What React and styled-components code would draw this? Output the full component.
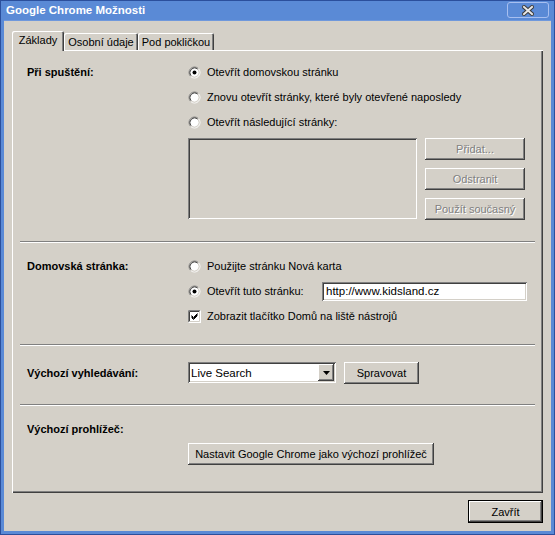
import React from 'react';
import styled, { createGlobalStyle, css } from 'styled-components';

const Global = createGlobalStyle`
  html, body { margin: 0; padding: 0; background: #d4d0c8; }
  body {
    font-family: "Liberation Sans", Arial, sans-serif;
    font-size: 11px;
    color: #000;
  }
  * { box-sizing: border-box; }
`;

const raised = css`
  background: #d4d0c8;
  border: none;
  box-shadow: inset -1px -1px #404040, inset 1px 1px #ffffff,
    inset -2px -2px #808080, inset 2px 2px #d4d0c8;
`;

const sunken = css`
  border: none;
  box-shadow: inset 1px 1px #808080, inset -1px -1px #ffffff,
    inset 2px 2px #404040, inset -2px -2px #d4d0c8;
`;

const Frame = styled.div`
  width: 555px;
  height: 535px;
  background: #5a8ad6;
  border: 1px solid #2b4f9c;
  padding: 0 3px 3px 3px;
  display: flex;
  flex-direction: column;
`;

const TitleBar = styled.div`
  height: 20px;
  display: flex;
  align-items: flex-start;
  justify-content: space-between;
  padding: 0 2px;
  border-bottom: 1px solid #6f98dc;
`;

const Title = styled.div`
  color: #ffffff;
  font-weight: bold;
  font-size: 11.5px;
  line-height: 19px;
`;

const CloseButton = styled.div`
  width: 42px;
  height: 16px;
  margin-top: 1px;
  border: 1px solid #a7bff0;
  border-radius: 3px;
  background: #5a8ad6;
  display: flex;
  align-items: center;
  justify-content: center;
`;

const Client = styled.div`
  flex: 1;
  background: #d4d0c8;
  padding: 10px 8px 8px 8px;
  display: flex;
  flex-direction: column;
`;

const TabStrip = styled.div`
  display: flex;
  align-items: flex-end;
  height: 19px;
`;

const Tab = styled.div`
  width: ${p => p.$w}px;
  height: ${p => (p.$active ? 20 : 17)}px;
  margin-bottom: ${p => (p.$active ? -1 : 0)}px;
  position: relative;
  z-index: ${p => (p.$active ? 2 : 1)};
  background: #d4d0c8;
  border-radius: 2px 2px 0 0;
  box-shadow: inset 1px 1px #ffffff, inset -1px 0 #404040, inset -2px 0 #808080;
  display: flex;
  align-items: ${p => (p.$active ? 'flex-start' : 'center')};
  padding-top: ${p => (p.$active ? 3 : 0)}px;
  justify-content: center;
  white-space: nowrap;
`;

const Panel = styled.div`
  height: 443px;
  background: #d4d0c8;
  box-shadow: inset 1px 1px #ffffff, inset -1px -1px #404040,
    inset -2px -2px #808080;
  padding: 1px 8px;
  display: flex;
  flex-direction: column;
`;

const Section = styled.div`
  display: grid;
  grid-template-columns: 161px 1fr;
  align-items: start;
  padding: ${p => p.$top}px 7px ${p => p.$bottom}px 7px;
`;

const Label = styled.div`
  font-weight: bold;
  line-height: ${p => p.$h || 20}px;
  height: ${p => p.$h || 20}px;
  white-space: nowrap;
`;

const Controls = styled.div`
  display: flex;
  flex-direction: column;
  gap: ${p => p.$gap ?? 5}px;
`;

const Choice = styled.div`
  height: 20px;
  display: flex;
  align-items: center;
  gap: 6px;
  white-space: nowrap;
`;

const Separator = styled.div`
  height: 2px;
  border-top: 1px solid #808080;
  border-bottom: 1px solid #ffffff;
`;

const ListRow = styled.div`
  display: flex;
  gap: 8px;
  margin-top: 1px;
`;

const ListBox = styled.div`
  ${sunken};
  width: 229px;
  height: 81px;
  background: #d4d0c8;
`;

const SideButtons = styled.div`
  display: flex;
  flex-direction: column;
  gap: 8px;
`;

const Button = styled.div`
  ${raised};
  width: ${p => p.$w}px;
  height: ${p => p.$h || 22}px;
  display: flex;
  align-items: center;
  justify-content: center;
  white-space: nowrap;
  color: ${p => (p.$disabled ? '#808080' : '#000')};
  text-shadow: ${p => (p.$disabled ? '1px 1px #ffffff' : 'none')};
`;

const DefaultButton = styled(Button)`
  box-shadow: inset 0 0 0 1px #000000, inset -2px -2px #404040,
    inset 2px 2px #ffffff, inset -3px -3px #808080;
`;

const UrlInput = styled.div`
  ${sunken};
  background: #ffffff;
  width: 205px;
  height: 19px;
  margin-left: auto;
  margin-right: 1px;
  padding: 0 4px;
  display: flex;
  align-items: center;
  font-size: 11.5px;
`;

const SearchRow = styled.div`
  display: flex;
  gap: 8px;
  align-items: flex-start;
`;

const Select = styled.div`
  ${sunken};
  background: #ffffff;
  width: 148px;
  height: 21px;
  padding: 2px 2px 2px 3px;
  display: flex;
  align-items: center;
  justify-content: space-between;
  font-size: 11.5px;
`;

const DropButton = styled.div`
  ${raised};
  width: 16px;
  height: 17px;
  display: flex;
  align-items: center;
  justify-content: center;
`;

const Footer = styled.div`
  display: flex;
  justify-content: flex-end;
  padding-top: 7px;
`;

const BrowserBlock = styled.div`
  display: flex;
  flex-direction: column;
  gap: 4px;
  padding: 13px 7px 0 7px;
`;

const Indent = styled.div`
  padding-left: 161px;
`;

function Radio({ checked }) {
  return (
    <svg width="13" height="13" viewBox="0 0 13 13">
      <circle cx="6.5" cy="6.5" r="4.5" fill="#ffffff" />
      <path d="M2.61 10.39 A5.5 5.5 0 0 1 10.39 2.61" fill="none" stroke="#808080" strokeWidth="1" />
      <path d="M10.39 2.61 A5.5 5.5 0 0 1 2.61 10.39" fill="none" stroke="#ffffff" strokeWidth="1" />
      <path d="M3.32 9.68 A4.5 4.5 0 0 1 9.68 3.32" fill="none" stroke="#404040" strokeWidth="1" />
      <path d="M9.68 3.32 A4.5 4.5 0 0 1 3.32 9.68" fill="none" stroke="#d4d0c8" strokeWidth="1" />
      {checked && <circle cx="6.5" cy="6.5" r="2" fill="#000000" />}
    </svg>
  );
}

function Checkbox() {
  return (
    <svg width="13" height="13" viewBox="0 0 13 13">
      <rect x="0" y="0" width="13" height="13" fill="#ffffff" />
      <path d="M0.5 12.5 V0.5 H12.5" fill="none" stroke="#808080" />
      <path d="M1.5 11.5 V1.5 H11.5" fill="none" stroke="#404040" />
      <path d="M0.5 12.5 H12.5 V0.5" fill="none" stroke="#ffffff" />
      <path d="M1.5 11.5 H11.5 V1.5" fill="none" stroke="#d4d0c8" />
      <path d="M3.5 5.5 L5.5 7.5 L9.5 3.5 M3.5 6.5 L5.5 8.5 L9.5 4.5 M3.5 7.5 L5.5 9.5 L9.5 5.5" fill="none" stroke="#000000" strokeWidth="1" />
    </svg>
  );
}

function CloseX() {
  return (
    <svg width="12" height="11" viewBox="0 0 12 11">
      <path d="M2 2 L10 9 M10 2 L2 9" stroke="#3b3b3b" strokeWidth="4" strokeLinecap="square" />
      <path d="M2 2 L10 9 M10 2 L2 9" stroke="#e6e6e6" strokeWidth="2" strokeLinecap="square" />
    </svg>
  );
}

function DownArrow() {
  return (
    <svg width="7" height="4" viewBox="0 0 7 4">
      <path d="M0 0 H7 L3.5 4 Z" fill="#000000" />
    </svg>
  );
}

export default function App() {
  return (
    <>
      <Global />
      <Frame>
        <TitleBar>
          <Title>Google Chrome Možnosti</Title>
          <CloseButton>
            <CloseX />
          </CloseButton>
        </TitleBar>
        <Client>
          <TabStrip>
            <Tab $active $w={52}>Základy</Tab>
            <Tab $w={74}>Osobní údaje</Tab>
            <Tab $w={76}>Pod pokličkou</Tab>
          </TabStrip>
          <Panel>
            <Section $top={11} $bottom={21}>
              <Label>Při spuštění:</Label>
              <Controls>
                <Choice><Radio checked />Otevřít domovskou stránku</Choice>
                <Choice><Radio />Znovu otevřít stránky, které byly otevřené naposledy</Choice>
                <Choice><Radio />Otevřít následující stránky:</Choice>
                <ListRow>
                  <ListBox />
                  <SideButtons>
                    <Button $w={100} $disabled>Přidat...</Button>
                    <Button $w={100} $disabled>Odstranit</Button>
                    <Button $w={100} $disabled>Použít současný</Button>
                  </SideButtons>
                </ListRow>
              </Controls>
            </Section>
            <Separator />
            <Section $top={13} $bottom={18}>
              <Label>Domovská stránka:</Label>
              <Controls>
                <Choice><Radio />Použijte stránku Nová karta</Choice>
                <Choice>
                  <Radio checked />Otevřít tuto stránku:
                  <UrlInput>http://www.kidsland.cz</UrlInput>
                </Choice>
                <Choice><Checkbox />Zobrazit tlačítko Domů na liště nástrojů</Choice>
              </Controls>
            </Section>
            <Separator />
            <Section $top={16} $bottom={20}>
              <Label $h={22}>Výchozí vyhledávání:</Label>
              <SearchRow>
                <Select>
                  Live Search
                  <DropButton><DownArrow /></DropButton>
                </Select>
                <Button $w={75}>Spravovat</Button>
              </SearchRow>
            </Section>
            <Separator />
            <BrowserBlock>
              <Label>Výchozí prohlížeč:</Label>
              <Indent>
                <Button $w={246}>Nastavit Google Chrome jako výchozí prohlížeč</Button>
              </Indent>
            </BrowserBlock>
          </Panel>
          <Footer>
            <DefaultButton $w={75} $h={23}>Zavřít</DefaultButton>
          </Footer>
        </Client>
      </Frame>
    </>
  );
}
